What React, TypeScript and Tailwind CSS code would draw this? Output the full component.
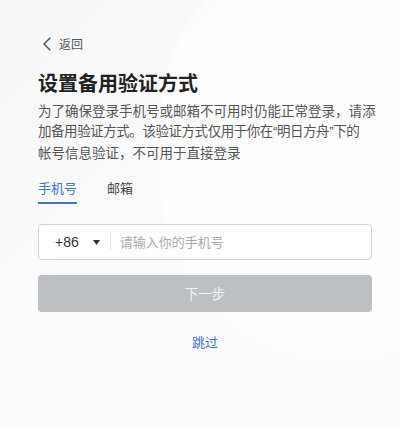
import React from "react";

export default function App() {
  const font = "font-['Noto_Sans_CJK_SC','Noto_Sans',sans-serif]";
  return (
    <div className={`relative min-h-[429px] w-full overflow-hidden bg-[linear-gradient(135deg,#f6f7f9_0%,#fbfbfc_40%,#fcfcfd_100%)] ${font}`}>
      <div className="pointer-events-none absolute -right-[120px] -top-[60px] h-[420px] w-[360px] rounded-full bg-[#fdfdfe] opacity-70" />
      <div className="relative pl-[38px] pr-[28px] pt-[36px]">
        <div className="flex h-[16px] items-center">
          <svg width="10" height="14" viewBox="0 0 10 14" className="ml-[4px]">
            <polyline points="8,1 2,7 8,13" fill="none" stroke="#555" strokeWidth="1.5" strokeLinecap="round" strokeLinejoin="round" />
          </svg>
          <span className="ml-[7px] text-[12px] leading-[16px] text-[#555]">返回</span>
        </div>

        <h1 className="mt-[17px] text-[20px] font-bold leading-[28px] text-[#222]">设置备用验证方式</h1>

        <p className="mt-[3px] text-[13.5px] leading-[20px] text-[#555]">
          <span className="block whitespace-nowrap">为了确保登录手机号或邮箱不可用时仍能正常登录，请添</span>
          <span className="block whitespace-nowrap tracking-[-0.45px]">
            加备用验证方式。该验证方式仅用于你在
            <span className="font-['Liberation_Sans',sans-serif]">“</span>明日方舟
            <span className="font-['Liberation_Sans',sans-serif]">”</span>下的
          </span>
          <span className="block whitespace-nowrap">帐号信息验证，不可用于直接登录</span>
        </p>

        <div className="mt-[16px] flex gap-[30px]">
          <div className="border-b-2 border-[#4373cf] pb-[4px] text-[13px] leading-[20px] text-[#4373cf]">手机号</div>
          <div className="pb-[4px] text-[13px] leading-[20px] text-[#444]">邮箱</div>
        </div>

        <div className="mt-[20px] flex h-[36px] items-center rounded-[4px] border border-[#d0d2d5] bg-white pl-[16px]">
          <span className="font-['Liberation_Sans',sans-serif] text-[14px] text-[#333]">+86</span>
          <svg width="7" height="5" viewBox="0 0 7 5" className="ml-[14px]">
            <polygon points="0,0 7,0 3.5,5" fill="#333" />
          </svg>
          <div className="ml-[10px] h-[16px] w-px bg-[#e0e0e0]" />
          <span className="ml-[9px] text-[13px] text-[#aaa]">请输入你的手机号</span>
        </div>

        <div className="mt-[15px] flex h-[37px] items-center justify-center rounded-[4px] bg-[#bdc0c3] text-[13.5px] text-[#f2f3f4]">
          下一步
        </div>

        <div className="mt-[20px] text-center text-[13px] leading-[20px] text-[#4373cf]">跳过</div>
      </div>
    </div>
  );
}
